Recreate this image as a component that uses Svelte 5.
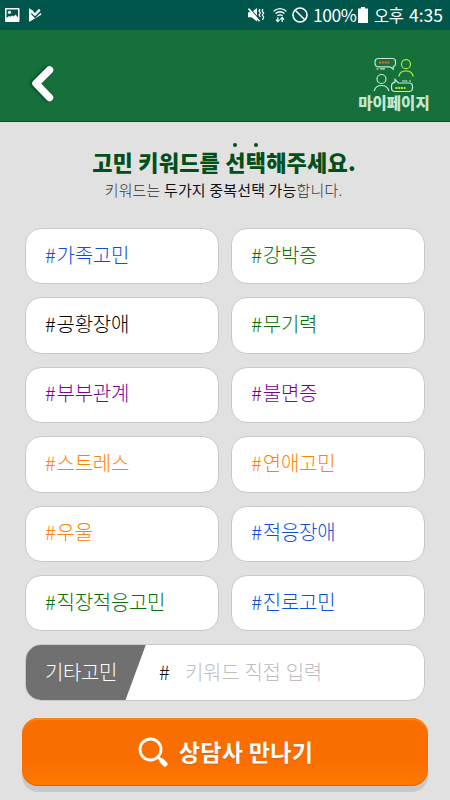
<script lang="ts">
  interface Keyword {
    label: string;
    tone: "blue" | "green" | "black" | "purple" | "orange";
  }

  const keywords: Keyword[] = [
    { label: "가족고민", tone: "blue" },
    { label: "강박증", tone: "green" },
    { label: "공황장애", tone: "black" },
    { label: "무기력", tone: "green" },
    { label: "부부관계", tone: "purple" },
    { label: "불면증", tone: "purple" },
    { label: "스트레스", tone: "orange" },
    { label: "연애고민", tone: "orange" },
    { label: "우울", tone: "orange" },
    { label: "적응장애", tone: "blue" },
    { label: "직장적응고민", tone: "green" },
    { label: "진로고민", tone: "blue" },
  ];

  let selected: string[] = $state([]);
  let custom = $state("");

  // at most two keywords can be active
  function toggle(label: string) {
    if (selected.includes(label)) {
      selected = selected.filter((s) => s !== label);
    } else if (selected.length < 2) {
      selected = [...selected, label];
    }
  }
</script>

<div class="screen">
  <div class="status">
    <svg class="picture" width="16" height="16" viewBox="0 0 16 16">
      <rect x="1" y="1" width="14.500" height="14" rx="1" fill="#fff" />
      <path d="M2.500 2.500h11.500v8l-2.500-3-1.800 2-1.500-1-2 1.200-1.200-.7-2.500 2z" fill="#00564b" />
      <circle cx="5.500" cy="5.300" r="1.600" fill="#fff" />
    </svg>
    <svg class="play" width="14" height="16" viewBox="0 0 14 16">
      <path d="M1 1.200 4.800 3.400 6.800 6.200 11 1.800l1.600 1.600-5.600 5.800-3.300-3.300-.9.900 4.200 4.400L12.500 6l1 1.400L1.500 14.700 1 14z" fill="#fff" />
    </svg>
    <span class="spacer"></span>
    <svg class="mute" width="18" height="16" viewBox="0 0 18 16">
      <path d="M1 5.200h3.500L10 1v13.500l-5.500-4.200H1z" fill="#fff" />
      <path d="M2.500 1l11 12.500" stroke="#00564b" stroke-width="1.200" />
      <path d="M1.500 1.600 12.500 14.200" stroke="#fff" stroke-width="1.600" />
      <path d="M13 2l-1 2 1.500 2-1.500 2 1.500 2M16 2l-1 2 1.700 2-1.400 2 1.400 2-1.200 3" fill="none" stroke="#fff" stroke-width="1.200" />
    </svg>
    <svg class="wifi" width="14" height="16" viewBox="0 0 14 16">
      <path d="M.6 4.200Q7-1 13.400 4.200M2.500 6.500Q7 3 11.500 6.500M4.400 8.700Q7 7 9.600 8.700" fill="none" stroke="#fff" stroke-width="1.300" />
      <path d="M4.800 10.200v4M3 12.700l1.800 2 1.800-2M9.200 15v-4M7.400 12.500l1.800-2 1.800 2" fill="none" stroke="#fff" stroke-width="1.200" />
    </svg>
    <svg class="blocked" width="16" height="16" viewBox="0 0 16 16">
      <circle cx="8" cy="8" r="7" fill="none" stroke="#fff" stroke-width="1.600" />
      <path d="M3 3l10 10" stroke="#fff" stroke-width="1.600" />
    </svg>
    <span class="percent">100%</span>
    <svg class="battery" width="10" height="16" viewBox="0 0 10 16">
      <path d="M3 0h4v1.500h3V16H0V1.500h3z" fill="#fff" />
    </svg>
    <span class="ampm">오후</span>
    <span class="clock">4:35</span>
  </div>

  <header>
    <button class="back" aria-label="뒤로">
      <svg width="32" height="44" viewBox="0 0 32 44">
        <path d="M24.500 8 11 21.500 24.500 35.500" />
      </svg>
    </button>
    <button class="mypage">
      <svg width="42" height="36" viewBox="0 0 42 36" fill="none" stroke-width="1.200">
        <g stroke="#c5e8cf">
          <path d="M5.500 1.500h14q3 0 3 3v2.500q0 2-2.300 2.700v2.600l-3.200-2.500H5.500q-3.500 0-3.500-3.500V5q0-3.500 3.500-3.500z" />
          <path d="M3.500 11.800h2M7 11.800h5" />
          <circle cx="8.500" cy="22" r="4.500" />
          <path d="M1.200 34q1.300-5.500 7.300-5.500t7.300 5.500" />
          <path d="M22 25.200v-2.700l3.500 3.500h10.500q3.500 0 3.500 3.500v1.500q0 3.500-3.500 3.500H22q-3.500 0-3.500-3.500v-2q0-3 3.500-3.800z" />
          <path d="M29 24h5.500M36 24h2" />
        </g>
        <g stroke="#b4e63c">
          <circle cx="33" cy="7.200" r="4.500" />
          <path d="M25.700 19.500q1.300-5.600 7.300-5.600t7.300 5.600" />
        </g>
        <path d="M6 5.600h10.500" stroke="#ed6b1c" stroke-width="2" stroke-dasharray="2 .8" />
        <path d="M22.500 31h10" stroke="#d6df2c" stroke-width="2" stroke-dasharray="2 .8" />
      </svg>
      <span>마이페이지</span>
    </button>
  </header>

  <main>
    <h1>고민 키워드를 <span class="dotted">선</span><span class="dotted">택</span>해주세요.</h1>
    <p>키워드는 <b>두가지 중복선택 가능</b>합니다.</p>

    <div class="keywords">
      {#each keywords as { label, tone }}
        <button
          class="keyword {tone}"
          class:selected={selected.includes(label)}
          onclick={() => toggle(label)}
        >
          <span>#</span>{label}
        </button>
      {/each}
    </div>

    <label class="custom">
      <span class="custom-label">기타고민</span>
      <span class="hash">#</span>
      <input type="text" bind:value={custom} placeholder="키워드 직접 입력" />
    </label>

    <button class="submit">
      <svg width="32" height="32" viewBox="0 0 32 32" fill="none" stroke="#fff">
        <circle cx="13.500" cy="13.500" r="10.500" stroke-width="2.800" />
        <path d="M21.500 21.500l2.500 2.500" stroke-width="2.500" />
        <path d="M25 25l3 3" stroke-width="5" stroke-linecap="round" />
      </svg>
      <span>상담사 만나기</span>
    </button>
  </main>
</div>

<style>
  :global(body) {
    margin: 0;
    background: #e1e1e1;
  }
  .screen {
    width: 450px;
    height: 800px;
    overflow: hidden;
    background: #e1e1e1;
    font-family: "Noto Sans CJK KR", sans-serif;
  }
  button {
    font-family: inherit;
    border: none;
    padding: 0;
    margin: 0;
    cursor: pointer;
  }
  svg {
    display: block;
    flex-shrink: 0;
  }
  .status {
    display: flex;
    align-items: center;
    box-sizing: border-box;
    height: 30px;
    padding: 0 6px 0 4px;
    background: #00564b;
    color: #fff;
    font-size: 18px;
    line-height: 30px;
    white-space: nowrap;
  }
  .play {
    margin-left: 8px;
  }
  .spacer {
    flex: 1;
  }
  .mute {
    margin-right: 1px;
  }
  .wifi {
    margin-left: 7px;
  }
  .blocked {
    margin-left: 5px;
  }
  .percent {
    width: 42px;
    margin-left: 5px;
    font-size: 17.5px;
    letter-spacing: -0.5px;
  }
  .battery {
    margin-left: 3px;
  }
  .ampm {
    width: 29px;
    margin-left: 6px;
    font-size: 16.5px;
    letter-spacing: -0.5px;
  }
  .clock {
    width: 35px;
    margin-left: 6px;
    font-size: 17.5px;
  }
  header {
    display: flex;
    justify-content: space-between;
    align-items: flex-start;
    box-sizing: border-box;
    height: 92px;
    padding: 0 20px 0 25px;
    background: #15703c;
    border-bottom: 1px solid #075f0b;
  }
  .back {
    margin-top: 32px;
    background: none;
  }
  .back path {
    fill: none;
    stroke: #fff;
    stroke-width: 7.5;
    stroke-linecap: round;
    stroke-linejoin: round;
    filter: drop-shadow(-2px 0 1.5px rgba(0, 40, 20, 0.55));
  }
  .mypage {
    display: flex;
    flex-direction: column;
    align-items: center;
    width: 72px;
    margin-top: 27px;
    background: none;
    color: #c5e8cf;
    font-size: 15.5px;
    font-weight: 900;
    line-height: 20px;
    white-space: nowrap;
  }
  .mypage span {
    margin-top: -1px;
  }
  main {
    padding: 23px 22px 0;
  }
  h1 {
    margin: 0 -4px 0 -6px;
    color: #034f1a;
    font-size: 22px;
    font-weight: 900;
    letter-spacing: 0.2px;
    line-height: 32px;
    text-align: center;
    white-space: nowrap;
  }
  .dotted {
    position: relative;
  }
  .dotted::before {
    content: "";
    position: absolute;
    top: -2px;
    left: 8px;
    width: 4px;
    height: 4px;
    border-radius: 50%;
    background: #034f1a;
  }
  p {
    margin: 1px 3px 0 0;
    color: #333;
    font-size: 15px;
    font-weight: 300;
    letter-spacing: 0.15px;
    line-height: 24px;
    text-align: center;
  }
  p b {
    color: #111;
    font-weight: 400;
  }
  .keywords {
    display: grid;
    grid-template-columns: 1fr 1fr;
    grid-auto-rows: 56.4px;
    gap: 13px 12.5px;
    margin: 26px 3px 0;
  }
  .keyword {
    box-sizing: border-box;
    padding: 0 0 4px 19px;
    border: 1px solid #c8c8c8;
    border-radius: 16px;
    background: #fff;
    font-size: 20px;
    font-weight: 300;
    letter-spacing: -0.3px;
    text-align: left;
  }
  .keyword span {
    margin-right: 1.2px;
  }
  .keyword.selected {
    border-color: currentColor;
  }
  .blue {
    color: #0b4fd8;
  }
  .green {
    color: #087108;
  }
  .black {
    color: #000;
  }
  .purple {
    color: #7c009b;
  }
  .orange {
    color: #ff8200;
  }
  .custom {
    display: flex;
    align-items: center;
    box-sizing: border-box;
    height: 57px;
    margin: 13px 3px 0;
    border: 1px solid #c8c8c8;
    border-radius: 16px;
    background: #fff;
    overflow: hidden;
    font-size: 20px;
    font-weight: 300;
  }
  .custom-label {
    box-sizing: border-box;
    width: 121px;
    height: 57px;
    margin-left: -1px;
    padding-left: 20px;
    background: #707070;
    clip-path: polygon(0 0, 100% 0, 100px 100%, 0 100%);
    color: #fff;
    letter-spacing: -0.4px;
    line-height: 55px;
  }
  .hash {
    width: 12px;
    margin: -2px 0 0 13px;
    color: #111;
  }
  .custom input {
    flex: 1;
    min-width: 0;
    margin: -2px 0 0 14px;
    padding: 0;
    border: none;
    outline: none;
    background: none;
    color: #111;
    font: inherit;
    letter-spacing: -0.3px;
    word-spacing: 1px;
  }
  .custom input::placeholder {
    color: #bdbdbd;
    opacity: 1;
  }
  .submit {
    display: flex;
    align-items: center;
    justify-content: center;
    box-sizing: border-box;
    width: 406px;
    height: 68px;
    margin-top: 17px;
    border-radius: 16px;
    background: linear-gradient(#fa6e00 60%, #ff7a00);
    box-shadow:
      inset 0 2px 1px #ff850f,
      inset 0 -1px 1px #e85f00,
      0 6px 0 #c8c8c8;
    color: #fff;
    font-size: 23px;
    font-weight: 700;
    letter-spacing: 0.3px;
  }
  .submit span {
    margin: -2px 0 0 10px;
    text-shadow: 0 1px 1px rgba(120, 60, 60, 0.3);
  }
</style>
